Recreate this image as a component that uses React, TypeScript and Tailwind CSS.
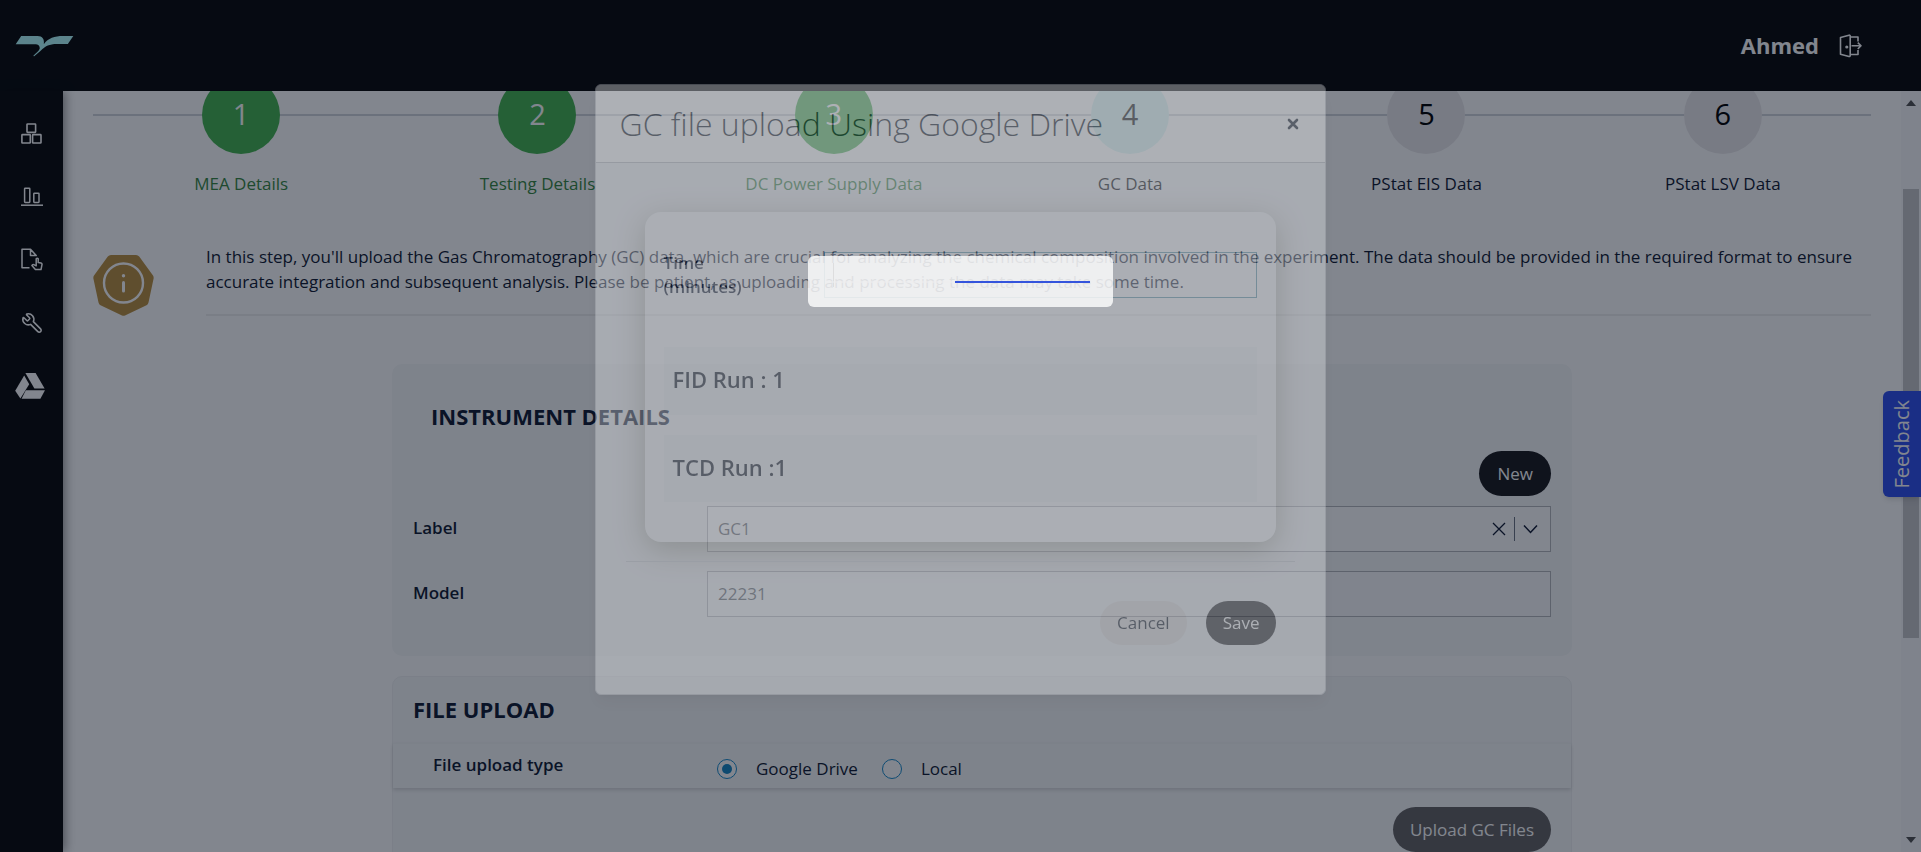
import type { ReactNode } from "react";
import { Wrench } from "lucide-react";

const steps = [
  { n: 1, label: "MEA Details", state: "done" },
  { n: 2, label: "Testing Details", state: "done" },
  { n: 3, label: "DC Power Supply Data", state: "done" },
  { n: 4, label: "GC Data", state: "current" },
  { n: 5, label: "PStat EIS Data", state: "todo" },
  { n: 6, label: "PStat LSV Data", state: "todo" },
];

const circleStyle: Record<string, string> = {
  done: "bg-[#45b34f] text-white",
  current: "bg-[#d3f3f2] text-black",
  todo: "bg-[#ebe9eb] text-black",
};

const labelStyle: Record<string, string> = {
  done: "text-[#37873f]",
  current: "text-black",
  todo: "text-[#0f1830]",
};

function Logo() {
  return (
    <svg viewBox="0 0 172 64" className="h-[22px] w-[59px]" fill="#b2fbfb" aria-hidden="true">
      <path d="M2 27 L18 3 H66 C80 3 86 12 84 27 C97 9 115 3 140 3 H170 L154 26 H122 C100 26 88 33 80 41 C72 49 64 55 56 62 L53 61 C60 53 70 47 72 40 C73 31 67 27 58 27 Z" />
    </svg>
  );
}

function DoorIcon() {
  return (
    <svg viewBox="0 0 24 24" className="h-6 w-6" fill="none" stroke="currentColor" strokeWidth="1.6" strokeLinejoin="round" aria-hidden="true">
      <path d="M1.5 3.5 L10 1.2 Q11.2 1 11.2 2 V21.6 Q11.2 22.8 10 22.5 L1.5 20.3 Z" />
      <path d="M11.2 3 H19 V7.5 M19 16 V20.5 H11.2" />
      <path d="M12.5 11.8 H22 M18.8 8.6 L22 11.8 L18.8 15" />
      <circle cx="7.8" cy="13" r="0.8" fill="currentColor" />
    </svg>
  );
}

function BoxesIcon() {
  return (
    <svg viewBox="0 0 21 21" className="h-[21px] w-[21px]" fill="none" stroke="currentColor" strokeWidth="1.6" aria-hidden="true">
      <rect x="6" y="1" width="8.6" height="8.4" rx="0.6" />
      <rect x="0.9" y="11.6" width="8.4" height="8.4" rx="0.6" />
      <rect x="11.6" y="11.6" width="8.4" height="8.4" rx="0.6" />
    </svg>
  );
}

function BarsIcon() {
  return (
    <svg viewBox="0 0 22 20" className="h-5 w-[22px]" fill="none" stroke="currentColor" strokeWidth="1.5" aria-hidden="true">
      <rect x="3.6" y="1.2" width="5.2" height="14.2" rx="0.6" />
      <rect x="12.8" y="6.2" width="5.2" height="9.2" rx="0.6" />
      <path d="M0 18.2 H22" />
    </svg>
  );
}

function FileHandIcon() {
  return (
    <svg viewBox="0 0 22 23" className="h-[23px] w-[22px]" fill="none" stroke="currentColor" strokeWidth="1.5" strokeLinejoin="round" aria-hidden="true">
      <path d="M8.5 19.8 H1 V1.2 H9.5 L15.2 7.6 H9.5 V1.2" />
      <path d="M15.2 16 V10.8 Q16.2 9.6 17.2 10.8 V14.4 L20 15 Q21.2 15.4 21 16.6 L20 21.6 H14.4 L10.9 17.6 Q11.4 16.2 12.8 16.6 L15.2 17.8 Z" />
    </svg>
  );
}

function DriveIcon() {
  return (
    <svg viewBox="0 0 30 26" className="mr-[3px] h-[26px] w-[30px]" fill="currentColor" aria-hidden="true">
      <path d="M10.4 0 H20.6 L29.6 15.4 H19.4 Z" />
      <path d="M9.2 2.4 L14.2 11.2 L5.4 25.6 L0.2 17.8 Z" />
      <path d="M10.8 17.2 H30 L25.4 25.8 H6.6 Z" />
    </svg>
  );
}

function InfoBadge() {
  return (
    <svg viewBox="0 0 61 61" className="mt-[11px] h-[61px] w-[61px] shrink-0" aria-hidden="true">
      <path d="M18 0 H43 Q45 0 46.200 1.600 L60 20.500 Q61 22 60.500 24 L55.500 47.500 Q55 49.500 53.500 50.300 L32 60.500 Q30.500 61.200 29 60.500 L7.500 50.300 Q6 49.500 5.500 47.500 L0.500 24 Q0 22 1 20.500 L14.800 1.600 Q16 0 18 0 Z" fill="#b98f3f" />
      <circle cx="30.500" cy="28" r="19.500" fill="none" stroke="#fff" strokeWidth="2.400" />
      <path d="M30.500 27.500 V36" stroke="#fff" strokeWidth="3" strokeLinecap="round" />
      <circle cx="30.500" cy="20.800" r="1.700" fill="#fff" />
    </svg>
  );
}

function NavLink({ label, children }: { label: string; children: ReactNode }) {
  return (
    <a href="#" aria-label={label} className="flex h-[63px] items-center justify-center">
      {children}
    </a>
  );
}

function UploadDialog() {
  return (
    <div role="dialog" aria-labelledby="dialog-title" className="absolute inset-x-0 top-[84px] mx-auto w-[38.1%] overflow-hidden rounded-md border border-[#c3c6cc] bg-[#eeeff3] opacity-35 shadow-lg">
      <div className="flex h-[78px] items-center justify-between border-b border-[#bcc0c6] bg-white pr-[26px] pl-6">
        <h2 id="dialog-title" className="text-[32px] font-light text-[#111827]">GC file upload Using Google Drive</h2>
        <button type="button" aria-label="Close" className="text-[#111827]">
          <svg viewBox="0 0 12 12" className="h-3 w-3" stroke="currentColor" strokeWidth="2.600" strokeLinecap="round" aria-hidden="true">
            <path d="M2 2 L10 10 M10 2 L2 10" />
          </svg>
        </button>
      </div>
      <div className="mx-[49px] mt-[49px] h-[330px] rounded-2xl bg-[#f8f9fc] px-[19px] pt-[39px] shadow-[0_8px_30px_rgba(60,60,30,0.4)]">
        <div className="flex">
          <label htmlFor="time" className="w-[160px] shrink-0 text-[17px] leading-6 font-semibold text-[#0f1830]">
            Time<br />(minutes)
          </label>
          <div className="mt-px flex h-[46px] min-w-0 grow items-center border border-[#5f97ab] px-2">
            <span className="h-6 w-px bg-black" />
            <input id="time" type="text" className="h-full min-w-0 grow bg-transparent text-[17px]" />
          </div>
        </div>
        <div className="mt-[48px] flex h-[68px] items-center bg-[#f1f2f6] px-[9px] pb-[3px] text-[22px] font-semibold text-[#111827]">FID Run : 1</div>
        <div className="mt-5 flex h-[67px] items-center bg-[#f1f2f6] px-[9px] pb-[3px] text-[22px] font-semibold text-[#111827]">TCD Run :1</div>
      </div>
      <hr className="mx-[30px] mt-[19px] border-[#cfd2d6]" />
      <div className="mt-[39px] mr-[49px] mb-[49px] flex justify-end gap-[19px]">
        <button type="button" className="h-11 rounded-full bg-[#e2e0df] px-[17px] text-[17px] text-[#111827]">Cancel</button>
        <button type="button" className="h-11 rounded-full bg-[#27272a] px-[17px] text-[17px] font-medium text-white">Save</button>
      </div>
    </div>
  );
}

export default function App() {
  return (
    <div className="relative flex h-screen flex-col overflow-hidden bg-white font-['Open_Sans',sans-serif] text-[17px] text-[#0f1830]">
      <header className="flex h-[91px] shrink-0 items-center justify-between bg-[#060707] pr-[58px] pl-[15px] text-white">
        <a href="#" aria-label="Home"><Logo /></a>
        <div className="flex items-center gap-5">
          <span className="text-[22px] font-bold">Ahmed</span>
          <button type="button" aria-label="Log out"><DoorIcon /></button>
        </div>
      </header>

      <div className="flex min-h-0 grow">
        <nav className="z-10 w-[63px] shrink-0 bg-[#060707] pt-[11px] text-white shadow-[2px_0_10px_rgba(0,0,0,0.45)]">
          <NavLink label="Dashboard"><BoxesIcon /></NavLink>
          <NavLink label="Charts"><BarsIcon /></NavLink>
          <NavLink label="Data entry"><FileHandIcon /></NavLink>
          <NavLink label="Tools"><Wrench className="h-[22px] w-[22px] -scale-x-100" strokeWidth={1.7} /></NavLink>
          <NavLink label="Google Drive"><DriveIcon /></NavLink>
        </nav>

        <main className="min-w-0 grow overflow-hidden px-[30px]">
          <ol className="relative -mt-[15px] grid grid-cols-6 before:absolute before:inset-x-0 before:top-[38px] before:h-[2px] before:bg-[#d1d5db]">
            {steps.map((s) => (
              <li key={s.n} className="relative flex flex-col items-center">
                <span className={`flex h-[78px] w-[78px] items-center justify-center rounded-full pb-[2px] text-[29px] ${circleStyle[s.state]}`}>{s.n}</span>
                <span className={`mt-[18px] leading-6 ${labelStyle[s.state]}`}>{s.label}</span>
              </li>
            ))}
          </ol>

          <section className="mt-[48px] flex gap-[52px]">
            <InfoBadge />
            <p className="grow border-b-2 border-[#efefef] pb-[20px] leading-[25px]">
              In this step, you'll upload the Gas Chromatography (GC) data, which are crucial for analyzing the chemical composition involved in the experiment. The data should be provided in the required format to ensure accurate integration and subsequent analysis. Please be patient, as uploading and processing the data may take some time.
            </p>
          </section>

          <section className="mx-auto mt-12 w-full max-w-[1180px] rounded-[10px] bg-[#f7f8f9] px-[21px] pt-[36px] pb-[39px]">
            <h2 className="pl-[18px] text-[22px] leading-8 font-bold">INSTRUMENT DETAILS</h2>
            <div className="mt-[19px] flex justify-end">
              <button type="button" className="h-[45px] rounded-full bg-[#18181b] px-[18px] font-medium text-white">New</button>
            </div>
            <div className="mt-[10px] flex items-center">
              <label htmlFor="label" className="w-[294px] shrink-0 pb-[3px] font-semibold">Label</label>
              <div className="flex h-[46px] min-w-0 grow items-center border border-[#b4b6ba] bg-white pr-3">
                <input id="label" type="text" defaultValue="GC1" className="h-full min-w-0 grow bg-transparent px-[10px] pb-[2px] text-[#52565c]" />
                <button type="button" aria-label="Clear">
                  <svg viewBox="0 0 14 14" className="h-[14px] w-[14px]" stroke="currentColor" strokeWidth="1.300" aria-hidden="true">
                    <path d="M1 1 L13 13 M13 1 L1 13" />
                  </svg>
                </button>
                <span className="mx-2 h-6 w-px bg-[#6b7280]" />
                <button type="button" aria-label="Open list">
                  <svg viewBox="0 0 15 10" className="h-[10px] w-[15px]" fill="none" stroke="currentColor" strokeWidth="1.500" aria-hidden="true">
                    <path d="M1 1.500 L7.500 8.500 L14 1.500" />
                  </svg>
                </button>
              </div>
            </div>
            <div className="mt-[19px] flex items-center">
              <label htmlFor="model" className="w-[294px] shrink-0 pb-[3px] font-semibold">Model</label>
              <input id="model" type="text" defaultValue="22231" className="h-[46px] min-w-0 grow border border-[#b4b6ba] bg-[#fbfbfc] px-[10px] pb-[2px] text-[#52565c]" />
            </div>
          </section>

          <section className="mx-auto mt-5 w-full max-w-[1180px] rounded-t-[10px] border border-[#f0f1f2] bg-[#f7f8f9]">
            <h2 className="flex h-[66px] items-center px-5 pb-[2px] text-[22px] font-bold">FILE UPLOAD</h2>
            <fieldset className="flex h-[45px] items-center border-t border-[#f3f4f5] pl-10 shadow-[0_2px_4px_rgba(0,0,0,0.14)]">
              <legend className="sr-only">File upload type</legend>
              <span className="w-[284px] shrink-0 pb-[3px] font-semibold">File upload type</span>
              <label className="flex items-center gap-[19px] pt-[5px]">
                <input type="radio" name="source" defaultChecked className="h-5 w-5 appearance-none rounded-full border border-[#1789c8] bg-white p-1 before:block before:h-[10px] before:w-[10px] before:rounded-full checked:before:bg-[#1687c2]" />
                Google Drive
              </label>
              <label className="ml-6 flex items-center gap-[19px] pt-[5px]">
                <input type="radio" name="source" className="h-5 w-5 appearance-none rounded-full border border-[#1789c8] bg-white" />
                Local
              </label>
            </fieldset>
            <div className="flex justify-end px-5 py-[19px]">
              <button type="button" className="h-[45px] rounded-full bg-[#656363] px-[17px] font-medium text-white">Upload GC Files</button>
            </div>
          </section>
        </main>

        <div className="flex w-5 shrink-0 flex-col items-center justify-between bg-[#f8f9fa] py-[9px]" aria-hidden="true">
          <svg viewBox="0 0 10 6" className="h-[6px] w-[10px]" fill="#505050"><path d="M0 6 L5 0 L10 6 Z" /></svg>
          <div className="mt-[83px] mb-auto h-[449px] w-4 bg-[#c4c4c7]" />
          <svg viewBox="0 0 10 6" className="h-[6px] w-[10px]" fill="#505050"><path d="M0 0 L5 6 L10 0 Z" /></svg>
        </div>
      </div>

      <button type="button" className="absolute top-[391px] right-0 z-10 flex h-[106px] w-[38px] items-center justify-center rounded-l-md bg-[#2f4fec] text-white shadow-md">
        <span className="rotate-180 text-[20px] [writing-mode:vertical-rl]">Feedback</span>
      </button>

      <div className="absolute inset-0 z-20 bg-[#050d1d]/50" />
      <div className="absolute inset-0 z-30">
        <UploadDialog />
        <div role="status" aria-label="Loading" className="absolute inset-x-0 top-[256px] mx-auto flex h-[51px] w-[305px] items-center rounded-md bg-white/80 px-[23px]">
          <div className="flex h-[2px] w-full justify-end bg-[#ececee]/60">
            <div className="h-[2px] w-[135px] bg-[#3454dc]" />
          </div>
        </div>
      </div>
    </div>
  );
}
